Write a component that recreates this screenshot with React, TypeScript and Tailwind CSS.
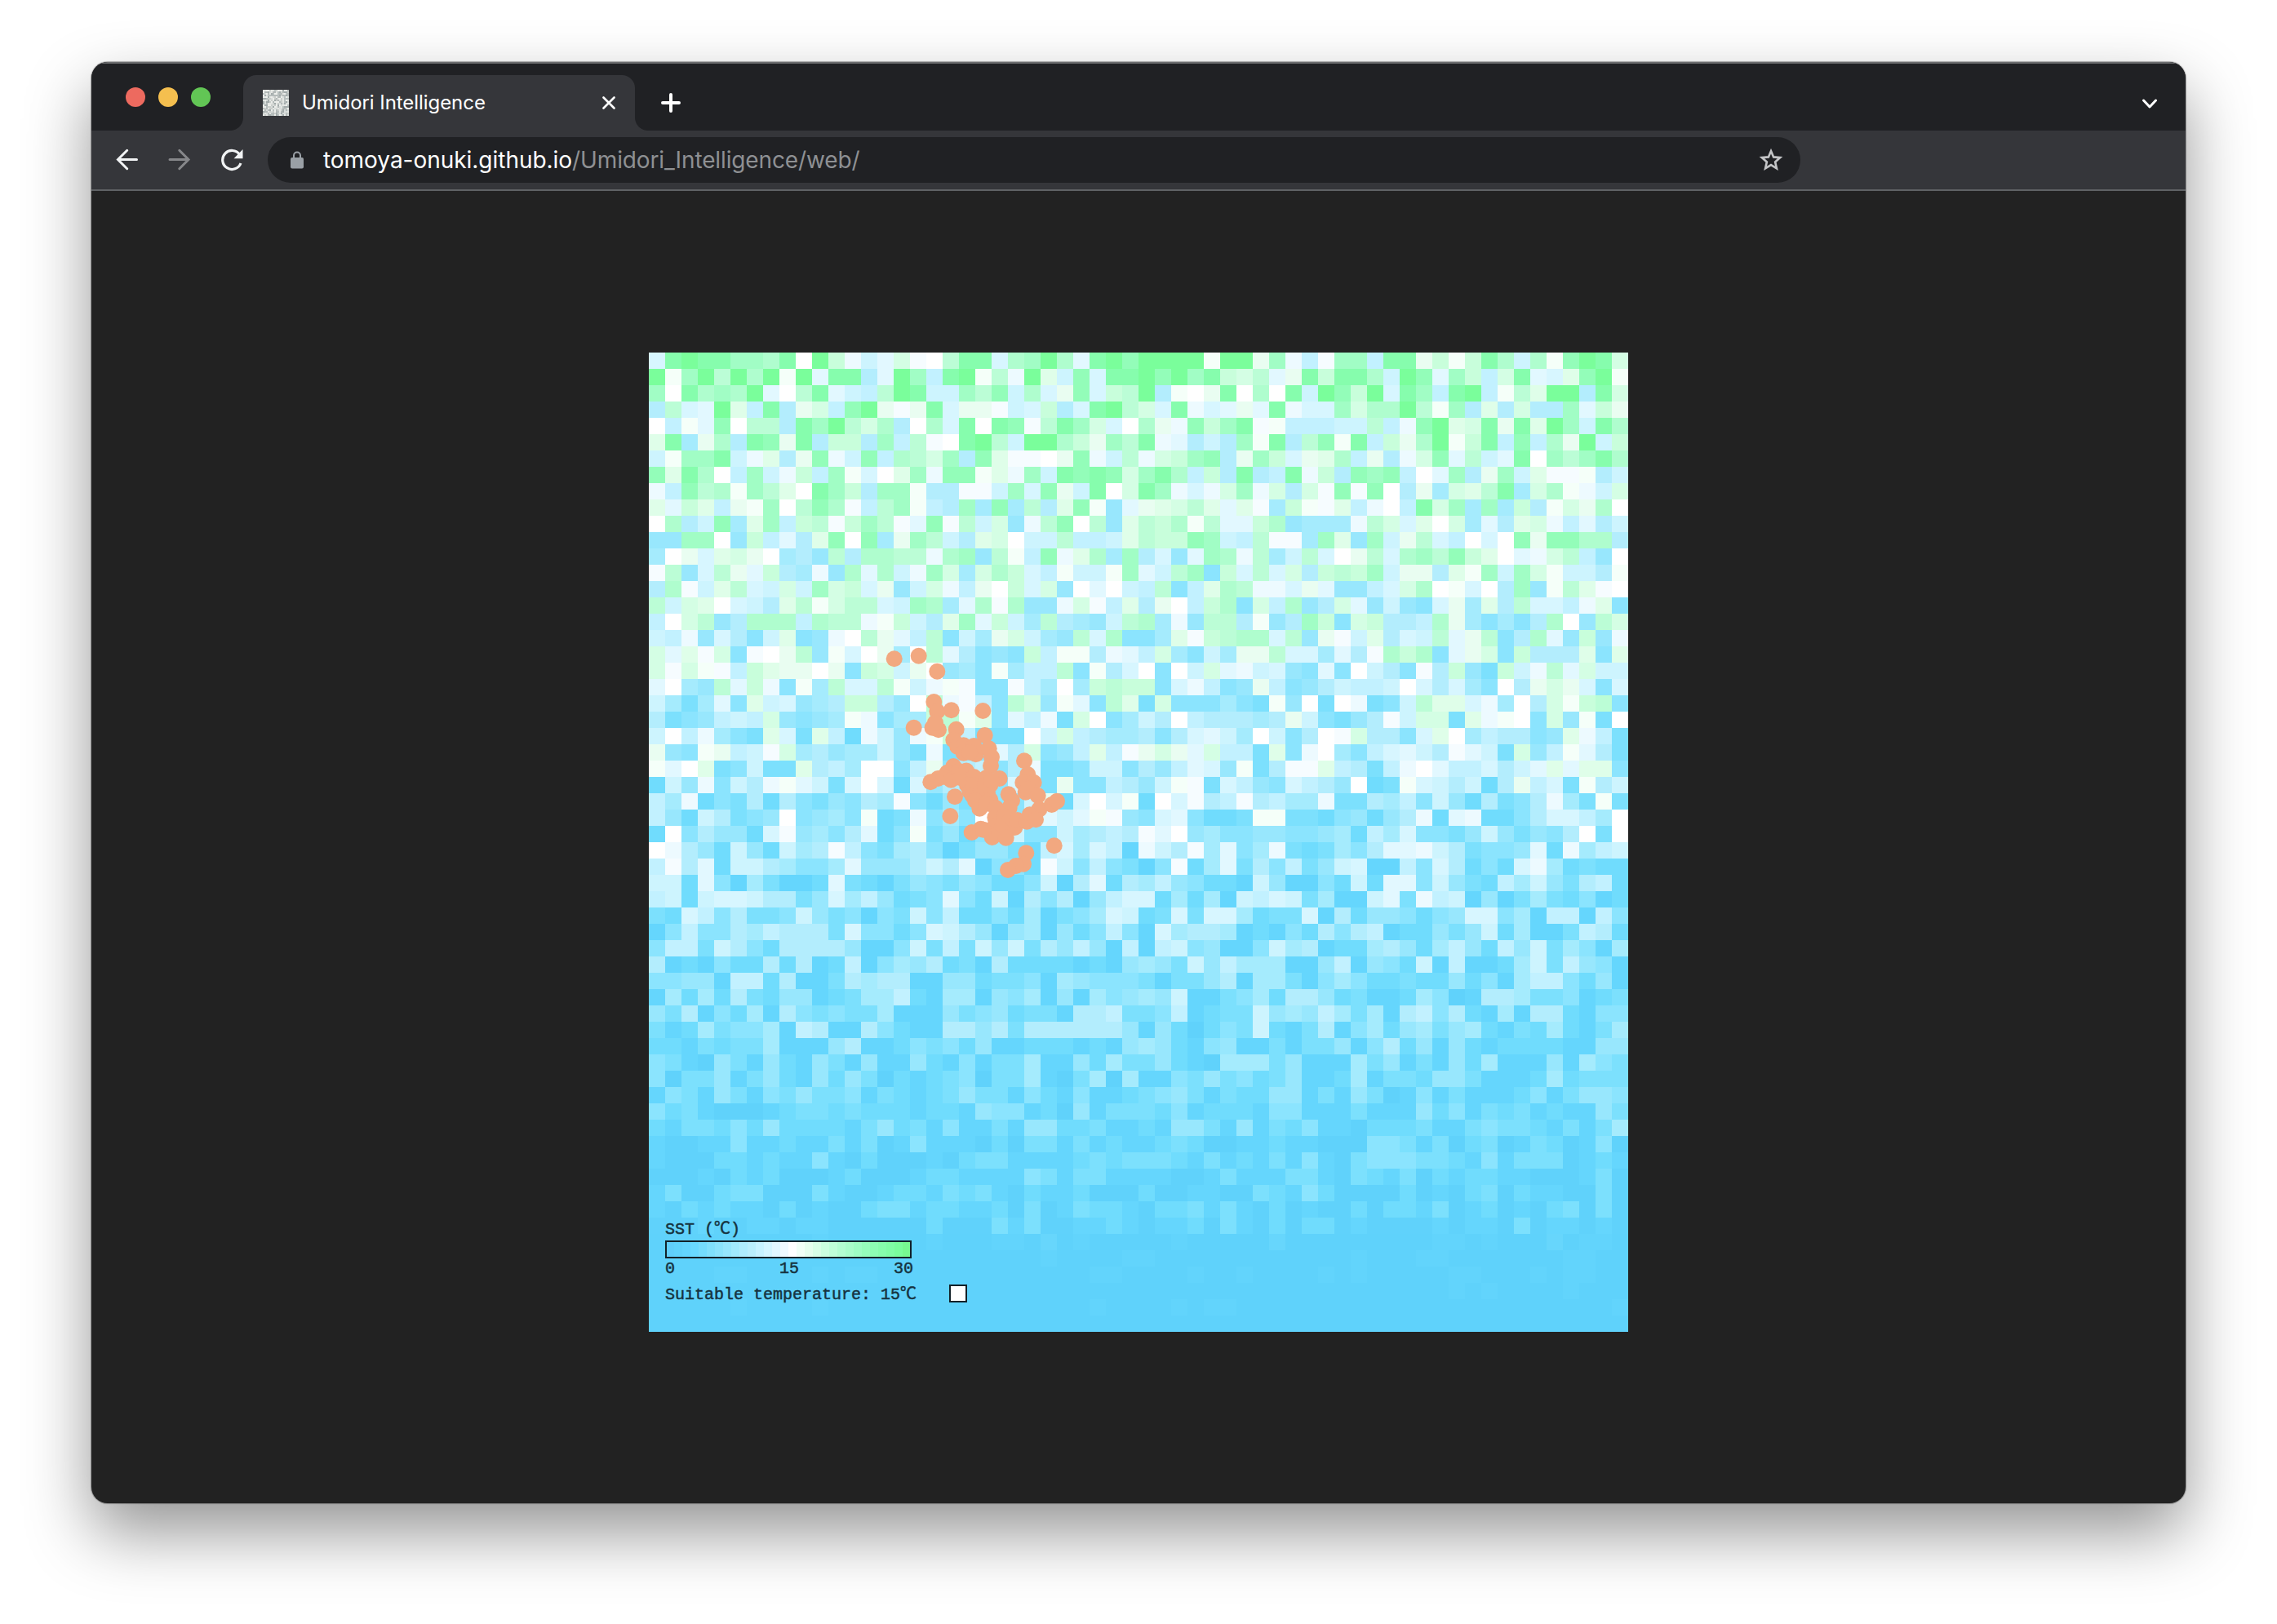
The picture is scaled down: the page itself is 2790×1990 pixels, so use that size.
import React from "react";

// Colour ramp of sea surface temperature, from cold (0) through neutral (E) to warm (P).
const RAMP: Record<string, string> = {
  "0": "#60d2fb", "1": "#65d6fd", "2": "#70dcfd", "3": "#7ce0fd", "4": "#8be4fe",
  "5": "#98e7fd", "6": "#a5ebfd", "7": "#b3edfd", "8": "#c2f1ff", "9": "#cdf4fe",
  A: "#d7f6ff", B: "#e2f8ff", C: "#edfaff", D: "#f6fcff", E: "#ffffff",
  F: "#f5fff9", G: "#e9fdf1", H: "#dffee9", I: "#d4fee4", J: "#c8fedb",
  K: "#bbfdd6", L: "#affdce", M: "#a1fdc5", N: "#93fdb9", O: "#86fdad", P: "#7afe9b",
};

// 60 x 60 cells, one character for each cell, one string for each row.
const ROWS = [
  "AOPOOMMLOEPJC9BIDEKOOALMPLBOPNPPPPFPPGMC8DMM8OOGJFJOL9LFNPOI",
  "PFMPKPLPFPBOO7BPM8OPFKCPH9NAOOPNPMOJIKBGOJOOL9PNBMJ8IOBAHNPF",
  "MEOLMLPBEKOB98KPO99MKN9LAGNAJKP7FEGOELEO9PNJPAOM8OP8FKHPP7OI",
  "7KABPH8O7GI8NPGDGOAGGD9AJ7AOPKIAOCABGBOCAAMILLPKFM7H7I77MBJG",
  "E8FBNEKK7OMPKIL7ELAOEONDKOMIAELGCNJMODF88899K8CNPHIOGOHPM9OL",
  "HO6GL7ONGO7JJ7M8KDEOPK9PPLJGMKOCB797MFO7KNFO8JGLPFJO8N8LGP9J",
  "9FMMO9CH7GNC9N8LKIM7NHDDEGNC9KCIJMN7GMJAGHL8G7CINBK9BOEMKMOL",
  "NHOLE8M9CJ8MFAEHMCNNFHCM9ONONIMOL8J7O78OCJ7NMN8EBM7GM9HDDF79",
  "C8NKLFMKHEOMJ7MMF77DD9MANG9OEIOMCACIMCI7IDNDNE7G6IHKO6ILFC9I",
  "HBJH8GFMEKNLD8KMF87M6N6K7HNF5BGHIKHBHD6JFDH8CE8OIM6M6J7FIGLE",
  "EL79N6HM8JKDJMKDBNDK9I5CKNEK5HKJLFKBBJL5666CKIAHEI6B7HIC8B79",
  "55MME5J8B7HNEN6GMK97HIE99K889HKJJNM98KDD6MH5M9GKA8EAENGNNLL7",
  "6EGAHIGE675K7LLKKCLM5KF8NCHL6M7A5BMLCK69KAEGKALMKNJHEBCIK85E",
  "DK5AKGBJ76C5LBL9CMI6ILJA8F99FMB9KM4JAKAI7JKJM9GG7HFM9MIF997F",
  "7LD9HKA9I9MIJAG59IC8GEJAI5EBE98K48HLKCCAGB558AILEFAE7M5FKHDE",
  "K9IHEA97HKFIKKA9ML6BLDL55CID8H7GE8JL4I8L57IB5954AG6H7KAA8CH4",
  "8EIK57LLL8LKKCFJ97HMBJ96K7659KL6C5KK7F57MJ4IJ778LG64647LE5KI",
  "98C5A749H45CEKGB8K496GI965KAL446HDJKLLAK5GD9H7A9KBGK47LB5J5C",
  "IBHDI4DEGK5FAEG6EKB7454J8FF7CB8I6496GGKAA6B7DLJL4BGI4J777H4H",
  "IDIFD8JHGGEG4JI9GE564F688K4F7AE4E9IBC9A54B4E974D7J53J9CKBI99",
  "BE65KBJC4F6KAAKF9CFD44D86E6JKJJ4AC845G84579889EA7A64E7GIGA4A",
  "9636B4H9A567JJ75EKCD84KI5FB4KH3I444643F5E3EC349KHHAC6E7IFJK4",
  "7345898I5456FC466JKFH4B8C3IE4697E877767G94357D9II3HCFE4I5F3E",
  "9E8C643HA3H82C95CFJ8333E9I8766747AB96E947EDI774AHE687745HC83",
  "G54FG89DI67566953C344B7I458H8DGIGBI883H4CE648AB97DB93I58FB73",
  "FBEH34933H786EE48G47847C334994758BA5F37DDH8738CEB88A79BHBHH4",
  "295C497CFB93AEA2A57644A93G448759FD3A854A875E23FA97927G8A3F79",
  "86C243727435476D42534449G2AEAF2EAD78D7866C3376849527347C63F3",
  "85297345E4564F23C464E448B9BFD54AB4223FF33245257C2BC2247AA86E",
  "2E47552AD5647B24F3524494496787DBE5644554456286A4435953547E3E",
  "EC752952967D8436741355328A6A81C97D6B46C323647BBC973445B2C689",
  "8D7B29976446B555797B1442D9484314D26B3748359A1184A7242AC62322",
  "992B4163112B321354354224917B27685422195114292BB4953286953782",
  "8929AA97735A685234B4291747158AA2626198A936119B3C891513632412",
  "32A8473349534143948224261346A923A3AA6233A172554245AA46188184",
  "148447687773A4424A9751561524841A6776121427478122535926113872",
  "4883974277775114938395937585181894511496712267526852859364 16".replace(" ", ""),
  "71214227271281465723172222121565395866611581542918112693 8541".replace(" ", ""),
  "4455188271137677115523341654443133571663146422322524168 84251".replace(" ", ""),
  "1626273255123668216615461516456591134627752311264017763 34123".replace(" ", ""),
  "537142617434336111534523317783348123395658636178472161772144",
  "312634461871174211775737777775152024392137146256356213262136",
  "221323361115711243425112221215652145113133514725152122221155",
  "431053152153151152141336115263352106663511163513152611151643",
  "403351352152530212340336103606114353423511261332553111262333",
  "143153143533413212353314214112345313225513153014131112413554",
  "423100012332322212215441205133324122214411131115241323121153",
  "213324252222135231411315522311215531513241102223113433213136",
  "100114112113130141110203313121123200112110004431302301320140",
  "100022121141020001023311112323332131213141034443321413330121",
  "000102120001200012211114313311110013111331032130212211000130",
  "130023300031001221323102112000200110032142000020102302110030",
  "102121102010023312211203013221022313102010020221301201023030",
  "000100110110000002000313001121011203102022010000101103011010",
  "000000000010000001000110201000001000002000000000110100020110",
  "000000000000000000000000100001100000000000010001100000001100",
  "000011000010110000000000000110000100100001010000011000101100",
  "000000000000000000000000000000000000000000000000010100001000",
  "000001000010000000000000000100001011000000000000000000000001",
  "000000000000000000000000000000000000000000000000000000000000",
];

// Rows from here down barely rise above the minimum temperature.
const COLD_ROW = 54;

const LEGEND = [
  "#60cefa", "#60d2fb", "#63d5fe", "#69d9ff", "#74dcfc", "#80e0fb", "#8be3fb", "#96e6fc",
  "#a1e9fd", "#afecfd", "#baeefc", "#c7f2ff", "#d4f5ff", "#e2f7ff", "#f0faff", "#ffffff",
  "#f1fff6", "#e5feed", "#d8fee6", "#cbfedf", "#bffed8", "#b3fdd1", "#a9fdca", "#9ffdc3",
  "#96fdbb", "#8dfdb3", "#86fdac", "#80fda5", "#7afd9c", "#77f991",
];

// Flock members, in canvas coordinates.
const BIRDS: [number, number][] = [
  [300.7, 375.3], [330.7, 371.7], [353.3, 390.7], [349.3, 428], [353.3, 439.7], [370.7, 438.3],
  [409.3, 439], [324.7, 459.7], [347.5, 459.7], [355, 462.3], [351, 453.5], [376.7, 461.7],
  [411.7, 469], [373.3, 474.7], [378.3, 483], [385.7, 481.3], [385.7, 490.7], [398.3, 482],
  [400.7, 492.3], [393.3, 489.7], [416.7, 485.3], [420, 495.7], [419, 506.3], [373.3, 507],
  [365.7, 514.7], [354.3, 522], [345.3, 526.3], [361.7, 519.7], [370.3, 523.7], [380, 513],
  [389, 512.5], [381.7, 521.3], [398.3, 520], [390, 529.7], [375, 544.3], [369.3, 568],
  [395.7, 588], [393.3, 538], [398.3, 529.7], [396.7, 543], [406.7, 538], [406.7, 548],
  [405.3, 558.7], [413.3, 521.3], [429.7, 522], [418.3, 529.7], [415, 539.7], [418.3, 548],
  [400, 549], [413, 553], [412, 530],
  [420, 524.7], [440.7, 541.3], [445, 549], [441.7, 558], [425, 558], [424.3, 569.7],
  [423.3, 581.3], [435, 568], [441.7, 574.7], [448.3, 582], [431.7, 584.7], [420.7, 594],
  [437.7, 594.7], [406.7, 583.7], [410, 584.7], [451.7, 573], [460, 500.3], [464.3, 517],
  [458.3, 527], [471.7, 527], [461.7, 538.7], [465, 534.7], [476.7, 543], [478.3, 559.7],
  [466.7, 566.3], [463.3, 574.7], [474, 572.3], [493.7, 554], [500, 549.7], [496.7, 604.3],
  [462.3, 613.3], [459, 626.7], [450, 629], [440, 634],
];

function Simulation() {
  return (
    <svg viewBox="0 0 1200 1200" className="block h-[1200px] w-[1200px]">
      <rect width="1200" height="1200" fill="#60d2fb" />
      <g shapeRendering="crispEdges">
        {ROWS.map((row, y) =>
          row.split("").map((c, x) => (
            <rect
              key={`${x}-${y}`}
              x={x * 20}
              y={y * 20}
              width="20"
              height="20"
              fill={RAMP[c]}
              opacity={y >= COLD_ROW ? 0.45 : 1}
            />
          )),
        )}
      </g>
      <g fill="#f2a880">
        {BIRDS.map(([x, y], i) => (
          <circle key={i} cx={x} cy={y} r="10" />
        ))}
      </g>
      {LEGEND.map((c, i) => (
        <rect key={c + i} x={21 + i * 10} y="1089" width="10" height="20" fill={c} shapeRendering="crispEdges" />
      ))}
      <rect x="21" y="1089" width="300" height="20" fill="none" stroke="#122128" strokeWidth="2" />
      <rect x="369" y="1143" width="20" height="20" fill="#fff" stroke="#122128" strokeWidth="2" />
      <g
        fill="#16333f"
        stroke="#16333f"
        strokeWidth="0.5"
        fontSize="20"
        style={{ fontFamily: '"Liberation Mono", "Noto Sans CJK JP", monospace', whiteSpace: "pre" }}
      >
        <text x="20" y="1080">SST (℃)</text>
        <text x="20" y="1127.5">0</text>
        <text x="160" y="1127.5">15</text>
        <text x="300" y="1127.5">30</text>
        <text x="20" y="1159.5">Suitable temperature: 15℃</text>
      </g>
    </svg>
  );
}

function Favicon() {
  const greys = ["#d8dcda", "#b4bab9", "#e4e6e3", "#a3abab", "#c9cdca", "#eceeeb", "#b8bfbe"];
  const shade = (i: number) => {
    const n = Math.sin(i * 12.9898 + 4.1) * 43758.5453;
    return greys[Math.floor((n - Math.floor(n)) * greys.length)];
  };
  return (
    <svg viewBox="0 0 16 16" className="size-8 shrink-0">
      {Array.from({ length: 256 }, (_, i) => (
        <rect key={i} x={i % 16} y={Math.floor(i / 16)} width="1" height="1" fill={shade(i)} />
      ))}
    </svg>
  );
}

export default function App() {
  return (
    <div className="h-[1990px] w-[2790px] overflow-hidden bg-white pt-[76px] pl-[112px] font-['Inter',sans-serif]">
      <div className="flex h-[1766px] w-[2566px] flex-col overflow-hidden rounded-[20px] bg-[#222222] shadow-[0_36px_80px_rgba(0,0,0,0.42),0_0_1px_1px_rgba(0,0,0,0.3)]">
        <div className="flex h-[84px] shrink-0 border-t-2 border-[#6b6c6e] bg-[#202124]">
          <div className="flex w-[170px] shrink-0 items-start gap-4 pt-[29px] pl-[42px]">
            <span className="size-6 rounded-full bg-[#ed6a5f]" />
            <span className="size-6 rounded-full bg-[#f5bf4f]" />
            <span className="size-6 rounded-full bg-[#62c655]" />
          </div>
          <div className="flex flex-1 items-end">
            <div className="size-4 shrink-0 bg-[radial-gradient(circle_at_0_0,#202124_15.5px,#35363a_16.5px)]" />
            <div className="flex h-[68px] w-[480px] items-center rounded-t-2xl bg-[#35363a] pr-6 pl-6">
              <Favicon />
              <span className="ml-4 flex-1 text-[24px] leading-8 tracking-[-0.06px] whitespace-nowrap text-white">
                Umidori Intelligence
              </span>
              <svg viewBox="0 0 16 16" className="size-4" stroke="#fff" strokeWidth="2.6" strokeLinecap="round">
                <path d="M1.5 1.5 14.5 14.5M14.5 1.5 1.5 14.5" />
              </svg>
            </div>
            <div className="size-4 shrink-0 bg-[radial-gradient(circle_at_100%_0,#202124_15.5px,#35363a_16.5px)]" />
            <svg viewBox="0 0 24 24" className="mb-[22px] ml-4 size-6" stroke="#fff" strokeWidth="4" strokeLinecap="round">
              <path d="M12 2V22M2 12H22" />
            </svg>
            <svg
              viewBox="0 0 20 12"
              className="mr-[34px] mb-[27px] ml-auto h-3 w-5"
              fill="none"
              stroke="#fff"
              strokeWidth="3"
              strokeLinecap="round"
              strokeLinejoin="round"
            >
              <path d="M2.5 2 10 10 17.5 2" />
            </svg>
          </div>
        </div>
        <div className="flex h-[74px] shrink-0 items-start border-b-2 border-[#5f6265] bg-[#35363a] pt-2">
          <div className="flex h-14 w-[216px] items-center pl-[30px]">
            <svg viewBox="0 0 28 28" className="size-7" fill="none" stroke="#f1f3f4" strokeWidth="3" strokeLinecap="round">
              <path d="M25.5 13.500H2.500M13.700 2.300 2.500 13.500l11.200 11.200" />
            </svg>
            <svg viewBox="0 0 28 28" className="ml-9 size-7" fill="none" stroke="#86878a" strokeWidth="3" strokeLinecap="round">
              <path d="M2 13.500H25M13.800 2.300 25 13.500 13.800 24.700" />
            </svg>
            <svg viewBox="0 0 28 28" className="ml-9 size-7">
              <path d="M23.6 7.3A11.5 11.5 0 1 0 25 18" fill="none" stroke="#f1f3f4" strokeWidth="3.2" />
              <path d="M27.5 1V12.2H16.5Z" fill="#f1f3f4" />
            </svg>
          </div>
          <div className="flex h-14 w-[1878px] items-center rounded-full bg-[#202124] pr-[19px] pl-7">
            <svg viewBox="0 0 16 22" className="h-[22px] w-4">
              <path d="M4 9V5.5a4 4 0 0 1 8 0V9" fill="none" stroke="#9aa0a6" strokeWidth="2" />
              <rect y="8" width="16" height="13.5" rx="2" fill="#9aa0a6" />
            </svg>
            <span className="ml-6 flex-1 text-[28px] leading-8 tracking-[-0.13px] whitespace-nowrap text-[#8e9093]">
              <span className="tracking-[-0.03px] text-white">tomoya-onuki.github.io</span>/Umidori_Intelligence/web/
            </span>
            <svg viewBox="0 0 34 34" className="size-[34px]" fill="none" stroke="#c3c4c6" strokeWidth="2.6">
              <path d="M17 6 20.1 13.4 28.2 14.1 22.1 19.4 23.9 27.3 17 23.1 10.1 27.3 11.9 19.4 5.8 14.1 13.9 13.4Z" />
            </svg>
          </div>
        </div>
        <div className="flex flex-1 items-start justify-center pt-[198px]">
          <Simulation />
        </div>
      </div>
    </div>
  );
}
